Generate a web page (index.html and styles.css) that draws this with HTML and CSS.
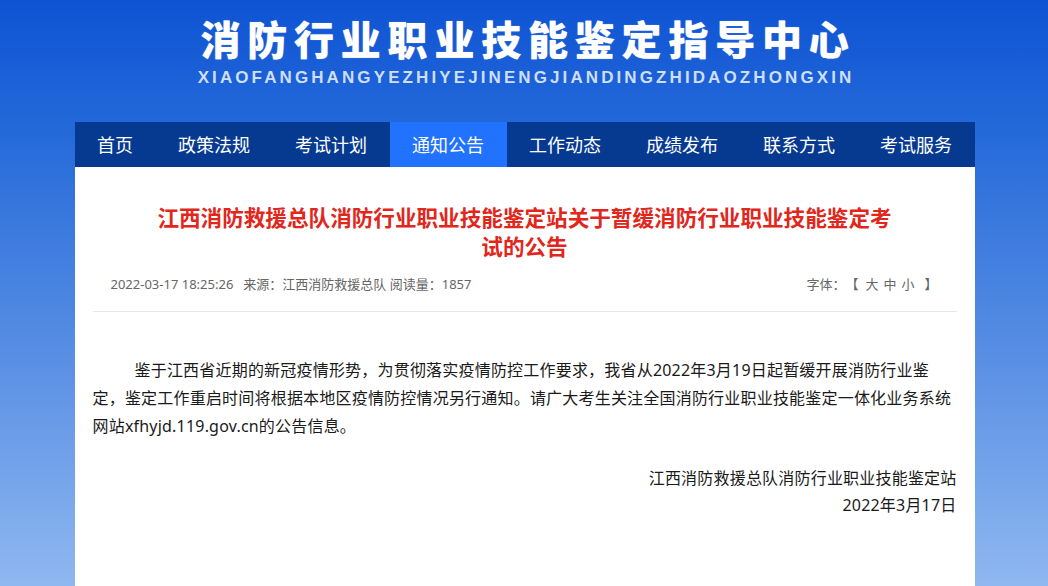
FILE: index.html
```html
<!DOCTYPE html>
<html lang="zh-CN">
<head>
<meta charset="utf-8">
<title>消防行业职业技能鉴定指导中心</title>
<link rel="stylesheet" href="styles.css">
</head>
<body>
<div class="page">
  <header class="header">
    <h1 class="site-title">消防行业职业技能鉴定指导中心</h1>
    <div class="site-pinyin">XIAOFANGHANGYEZHIYEJINENGJIANDINGZHIDAOZHONGXIN</div>
  </header>
  <nav class="nav">
    <a class="nav-item">首页</a>
    <a class="nav-item">政策法规</a>
    <a class="nav-item">考试计划</a>
    <a class="nav-item active">通知公告</a>
    <a class="nav-item">工作动态</a>
    <a class="nav-item">成绩发布</a>
    <a class="nav-item">联系方式</a>
    <a class="nav-item">考试服务</a>
  </nav>
  <main class="content">
    <h2 class="article-title">江西消防救援总队消防行业职业技能鉴定站关于暂缓消防行业职业技能鉴定考试的公告</h2>
    <div class="meta">
      <div class="meta-left"><span class="meta-date">2022-03-17 18:25:26</span><span class="meta-src">来源：江西消防救援总队</span> <span>阅读量：1857</span></div>
      <div class="meta-right"><span>字体：</span><span class="br">【</span><span class="fs fs-first">大</span><span class="fs">中</span><span class="fs">小</span><span class="br br-end">】</span></div>
    </div>
    <div class="article-body">
      <p class="para">鉴于江西省近期的新冠疫情形势，为贯彻落实疫情防控工作要求，我省从2022年3月19日起暂缓开展消防行业鉴定，鉴定工作重启时间将根据本地区疫情防控情况另行通知。请广大考生关注全国消防行业职业技能鉴定一体化业务系统网站xfhyjd.119.gov.cn的公告信息。</p>
      <div class="sign">
        <p>江西消防救援总队消防行业职业技能鉴定站</p>
        <p>2022年3月17日</p>
      </div>
    </div>
  </main>
</div>
</body>
</html>
```

FILE: styles.css
```css
html, body {
  margin: 0;
  padding: 0;
  height: 100%;
}
body {
  background: linear-gradient(180deg, #0e53d3 0%, #2368d9 21%, #5a90e4 62%, #8fb8f0 100%);
  font-family: "Noto Sans", "Noto Sans CJK SC", sans-serif;
  overflow: hidden;
}
.page {
  width: 900px;
  margin: 0 auto;
  padding-left: 1px;
}
.header {
  height: 122px;
  box-sizing: border-box;
  padding-top: 11px;
  display: flex;
  flex-direction: column;
  align-items: center;
}
.site-title {
  margin: 0;
  font-family: "Noto Sans CJK SC", sans-serif;
  font-size: 40px;
  line-height: 54px;
  font-weight: 900;
  color: #ffffff;
  letter-spacing: 6.8px;
  padding-left: 7px;
  text-shadow: 0 0 1px rgba(255,255,255,0.6);
}
.site-pinyin {
  margin-top: 2px;
  padding-left: 3px;
  font-family: "Liberation Sans", Arial, sans-serif;
  font-size: 17px;
  line-height: 22px;
  font-weight: 700;
  color: #cddffb;
  letter-spacing: 3.1px;
}
.nav {
  display: flex;
  height: 45px;
  background: #063a91;
}
.nav-item {
  padding: 0 22.5px;
  font-family: "Noto Sans CJK SC", sans-serif;
  font-size: 18px;
  line-height: 45px;
  color: #ffffff;
  white-space: nowrap;
}
.nav-item.active {
  background: #2172fe;
}
.content {
  background: #ffffff;
  min-height: 380px;
  padding: 35px 18px 20px 18px;
}
.article-title {
  margin: 0 auto;
  width: 745px;
  font-family: "Noto Sans CJK SC", sans-serif;
  font-size: 21.6px;
  line-height: 29px;
  font-weight: 700;
  color: #e1261c;
  text-align: center;
}
.meta {
  display: flex;
  justify-content: space-between;
  margin-top: 14px;
  padding: 0 19px 17px 18px;
  border-bottom: 1px solid #e8e8e8;
  font-family: "Noto Sans", "Noto Sans CJK SC", sans-serif;
  font-size: 13px;
  line-height: 20px;
  color: #666666;
}
.meta-src {
  margin-left: 10px;
}
.meta-right {
  display: flex;
}
.br {
  margin-left: 0;
}
.fs {
  margin-left: 5px;
}
.fs-first {
  margin-left: 7px;
}
.br-end {
  margin-left: 10px;
}
.article-body {
  padding-top: 44px;
  font-family: "Noto Sans", "Noto Sans CJK SC", sans-serif;
  font-size: 16px;
  color: #1a1a1a;
  letter-spacing: 0.2px;
}
.para {
  margin: 0;
  text-indent: 42px;
  line-height: 28px;
}
.sign {
  margin-top: 25px;
  text-align: right;
}
.sign p {
  margin: 0;
  line-height: 27px;
}
```
